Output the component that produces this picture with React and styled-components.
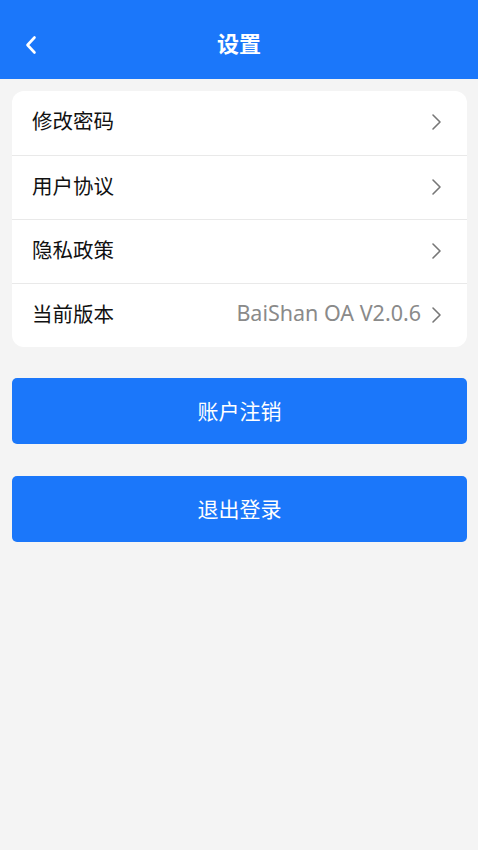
import React from "react";
import styled, { createGlobalStyle } from "styled-components";

const Global = createGlobalStyle`
  html, body { margin: 0; padding: 0; background: #f4f4f4; }
  body { font-family: "Noto Sans", "Noto Sans CJK SC", sans-serif; }
  * { box-sizing: border-box; }
`;

const Page = styled.div`
  min-height: 850px;
  background: #f4f4f4;
  display: flex;
  flex-direction: column;
`;

const Header = styled.header`
  height: 79px;
  padding-top: 5px;
  background: #1b77fa;
  display: flex;
  align-items: center;
  justify-content: center;
  position: relative;
`;

const BackButton = styled.button`
  position: absolute;
  left: 20px;
  top: 31px;
  width: 22px;
  height: 28px;
  border: none;
  background: transparent;
  padding: 0;
  display: flex;
  align-items: center;
  justify-content: center;
`;

const Title = styled.h1`
  margin: 0;
  color: #fff;
  font-size: 22px;
  font-weight: 700;
  font-family: "Noto Sans CJK SC", sans-serif;
`;

const Body = styled.main`
  padding: 12px 11px 0 12px;
  display: flex;
  flex-direction: column;
`;

const Card = styled.section`
  background: #fff;
  border-radius: 12px;
  overflow: hidden;
  display: flex;
  flex-direction: column;
`;

const Row = styled.div`
  height: 64px;
  display: flex;
  align-items: center;
  padding: 0 25px 6px 20px;
  border-top: ${(p) => (p.$first ? "none" : "1px solid #e9e9e9")};
`;

const Label = styled.span`
  flex: 1;
  font-size: 20.5px;
  color: #111;
  font-family: "Noto Sans CJK SC", sans-serif;
`;

const Value = styled.span`
  font-size: 21.5px;
  color: #8a8a8a;
  margin-right: 10px;
  font-family: "Noto Sans", "Noto Sans CJK SC", sans-serif;
`;

const ChevronWrap = styled.span`
  display: flex;
  padding-top: 4px;
`;

const Chevron = () => (
  <ChevronWrap>
    <svg width="11" height="18" viewBox="0 0 11 18" fill="none">
      <path d="M2 2 L9 9 L2 16" stroke="#777" strokeWidth="1.6" strokeLinecap="round" strokeLinejoin="round" />
    </svg>
  </ChevronWrap>
);

const Button = styled.button`
  height: 66px;
  margin-top: ${(p) => p.$gap}px;
  width: 100%;
  border: none;
  border-radius: 5px;
  background: #1b77fa;
  color: #fff;
  font-size: 21px;
  font-family: "Noto Sans CJK SC", sans-serif;
  display: flex;
  align-items: center;
  justify-content: center;
  padding: 0 0 2px;
`;

const items = [
  { label: "修改密码" },
  { label: "用户协议" },
  { label: "隐私政策" },
  { label: "当前版本", value: "BaiShan OA V2.0.6" },
];

export default function App() {
  return (
    <Page>
      <Global />
      <Header>
        <BackButton aria-label="返回">
          <svg width="14" height="20" viewBox="0 0 14 20" fill="none">
            <path d="M10.5 2.5 L3.5 10 L10.5 17.5" stroke="#fff" strokeWidth="2.6" strokeLinecap="round" strokeLinejoin="round" />
          </svg>
        </BackButton>
        <Title>设置</Title>
      </Header>
      <Body>
        <Card>
          {items.map((it, i) => (
            <Row key={it.label} $first={i === 0}>
              <Label>{it.label}</Label>
              {it.value && <Value>{it.value}</Value>}
              <Chevron />
            </Row>
          ))}
        </Card>
        <Button $gap={31}>账户注销</Button>
        <Button $gap={32}>退出登录</Button>
      </Body>
    </Page>
  );
}
